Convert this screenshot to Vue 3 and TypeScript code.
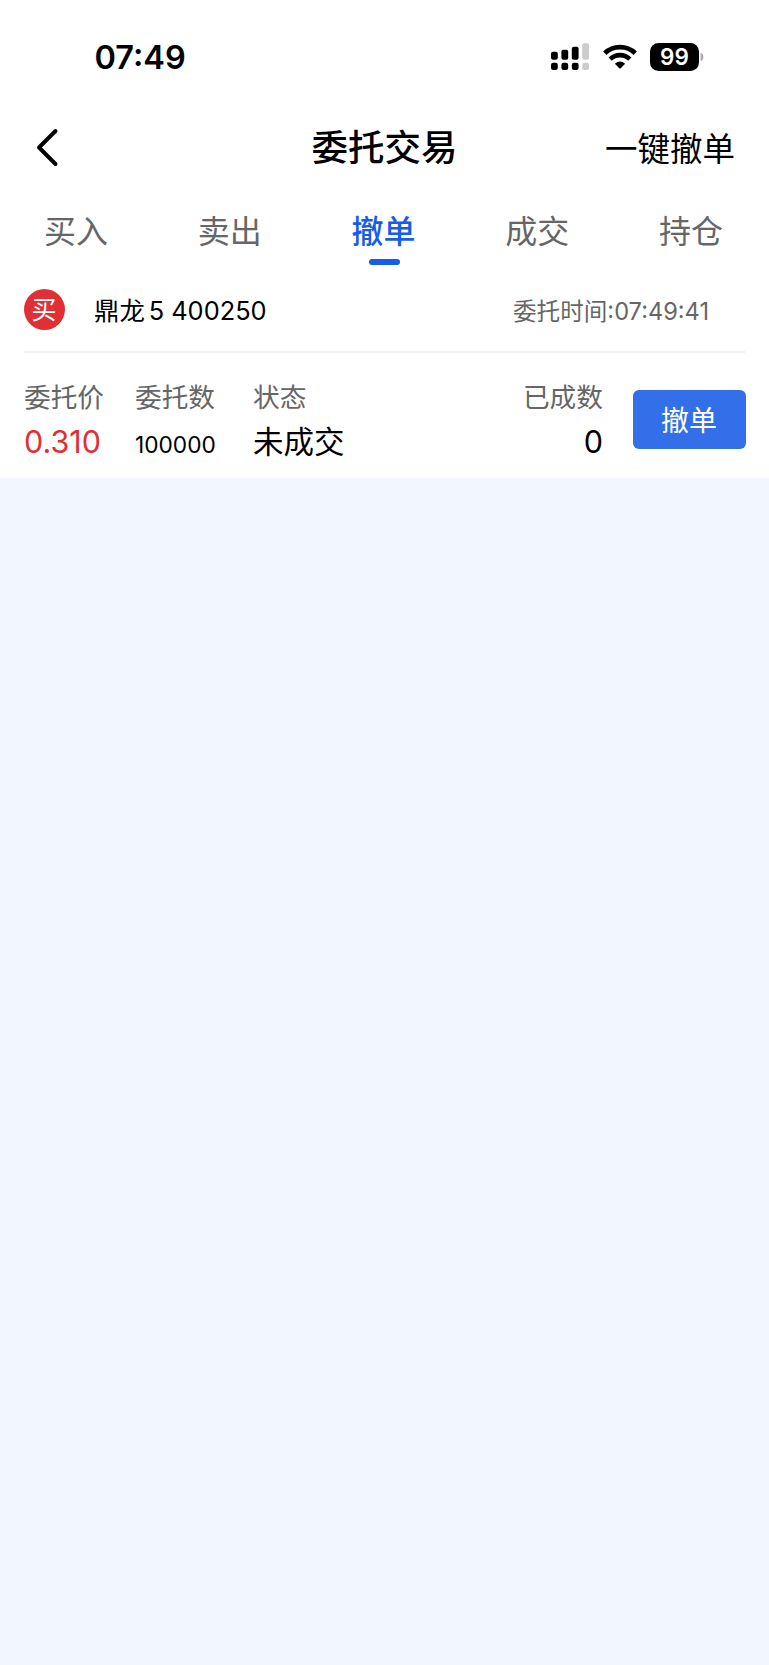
<script setup lang="ts">
import { ref } from 'vue'

interface Order {
  side: string
  name: string
  series: string
  code: string
  time: string
  price: string
  amount: string
  status: string
  filled: string
}

const tabs: string[] = ['买入', '卖出', '撤单', '成交', '持仓']
const active = ref(2)
const orders: Order[] = [
  {
    side: '买',
    name: '鼎龙',
    series: '5',
    code: '400250',
    time: '07:49:41',
    price: '0.310',
    amount: '100000',
    status: '未成交',
    filled: '0',
  },
]
</script>

<template>
  <div class="page">
    <header class="status">
      <span class="clock">07:49</span>
      <div class="indicators">
        <svg class="signal" width="39" height="28" viewBox="0 0 39 28">
          <g fill="#000">
            <rect x="0" y="8.7" width="6.8" height="8" rx="2" />
            <rect x="10.4" y="6.7" width="6.8" height="10" rx="2" />
            <rect x="20.8" y="3.7" width="6.8" height="13" rx="2" />
            <rect x="0" y="19.8" width="6.8" height="7.2" rx="2.2" />
            <rect x="10.4" y="19.8" width="6.8" height="7.2" rx="2.2" />
            <rect x="20.8" y="19.8" width="6.8" height="7.2" rx="2.2" />
          </g>
          <g fill="#ccc">
            <rect x="31.2" y="0.3" width="6.8" height="16.4" rx="2" />
            <rect x="31.2" y="19.8" width="6.8" height="7.2" rx="2.2" />
          </g>
        </svg>
        <svg class="wifi" width="34" height="26" viewBox="0 0 34 26">
          <g fill="none" stroke="#000" stroke-width="4.8">
            <path d="M1.8 9.3 A22 22 0 0 1 32.2 9.3" />
            <path d="M7.2 15.1 A14 14 0 0 1 26.8 15.1" />
          </g>
          <path d="M11.9 19.7 Q17 15.2 22.1 19.7 L17.7 24.2 Q17 24.9 16.3 24.2 Z" fill="#000" />
        </svg>
        <div class="battery">99</div>
        <svg class="cap" width="4" height="10" viewBox="0 0 4 10">
          <path d="M0.5 0.8 Q3.4 2 3.4 5 Q3.4 8 0.5 9.2 Z" fill="#aaa" />
        </svg>
      </div>
    </header>

    <nav class="navbar">
      <svg class="back" width="24" height="40" viewBox="0 0 24 40">
        <path d="M19.5 3 L3 19.5 L19.5 36" fill="none" stroke="#000" stroke-width="3.9" stroke-linecap="round" stroke-linejoin="round" />
      </svg>
      <h1 class="title">委托交易</h1>
      <span class="action">一键撤单</span>
    </nav>

    <div class="tabs">
      <div v-for="(tab, i) in tabs" :key="tab" class="tab" :class="{ active: i === active }" @click="active = i">
        <span class="tab-text">{{ tab }}</span>
        <i class="tab-line"></i>
      </div>
    </div>

    <section v-for="order in orders" :key="order.code" class="order">
      <div class="order-head">
        <span class="badge">{{ order.side }}</span>
        <div class="stock">
          <span>{{ order.name }}</span>
          <span class="series">{{ order.series }}</span>
          <span>{{ order.code }}</span>
        </div>
        <span class="time">委托时间:{{ order.time }}</span>
      </div>
      <div class="order-body">
        <div class="col price">
          <span class="label">委托价</span>
          <span class="value red">{{ order.price }}</span>
        </div>
        <div class="col amount">
          <span class="label">委托数</span>
          <span class="value small">{{ order.amount }}</span>
        </div>
        <div class="col state">
          <span class="label">状态</span>
          <span class="value">{{ order.status }}</span>
        </div>
        <div class="col filled">
          <span class="label">已成数</span>
          <span class="value">{{ order.filled }}</span>
        </div>
        <button class="cancel">撤单</button>
      </div>
    </section>
  </div>
</template>

<style>
body {
  margin: 0;
  background: #f2f6ff;
}
</style>

<style scoped>
.page {
  min-height: 1665px;
  background: #f2f6ff;
  color: #000;
  font-family: Inter, 'Noto Sans CJK SC', sans-serif;
}
.status {
  display: flex;
  justify-content: space-between;
  height: 114px;
  padding: 0 65px 0 94.5px;
  box-sizing: border-box;
  background: #fff;
}
.clock {
  margin-top: 38px;
  height: 40px;
  line-height: 40px;
  font-size: 32.5px;
  font-weight: 600;
}
.indicators {
  display: flex;
  align-items: flex-start;
  padding-top: 43px;
}
.wifi {
  margin: 1px 0 0 13px;
}
.battery {
  width: 49px;
  height: 28px;
  margin-left: 13px;
  border-radius: 8.5px;
  background: #000;
  color: #fff;
  font-size: 22.5px;
  font-weight: 600;
  line-height: 28px;
  text-align: center;
}
.cap {
  margin: 9px 0 0 1px;
}
.navbar {
  display: grid;
  grid-template-columns: 1fr auto 1fr;
  align-items: center;
  height: 68px;
  padding: 0 34px 0 35px;
  background: #fff;
}
.back {
  margin-left: 1px;
}
.title {
  margin: 0 1px 0 0;
  font-size: 36.5px;
  font-weight: 500;
  line-height: 66px;
}
.action {
  justify-self: end;
  padding-top: 3px;
  font-size: 32.5px;
  line-height: 65px;
}
.tabs {
  display: grid;
  grid-template-columns: repeat(5, 1fr);
  height: 90px;
  background: #fff;
}
.tab {
  display: flex;
  flex-direction: column;
  align-items: center;
  padding-top: 27px;
  color: #666;
  font-size: 32px;
}
.tab-text {
  height: 50px;
  margin-right: 2px;
  line-height: 46px;
}
.tab-line {
  width: 31px;
  height: 6px;
  border-radius: 3px;
}
.active {
  color: #165dea;
  font-weight: 500;
}
.active .tab-line {
  background: #165dea;
}
.order {
  height: 206px;
  padding: 0 23px 0 24px;
  background: #fff;
}
.order-head {
  display: flex;
  align-items: center;
  height: 79px;
  margin-right: 1px;
  border-bottom: 2px solid #f0f0f0;
}
.badge {
  width: 41px;
  height: 41px;
  margin: 0 0 5px -0.5px;
  border-radius: 50%;
  background: #e12f36;
  color: #fff;
  font-size: 25px;
  line-height: 42px;
  text-align: center;
}
.stock {
  display: flex;
  align-items: baseline;
  height: 40px;
  margin: 0 0 1px 29.5px;
  font-size: 25.4px;
  line-height: 40px;
}
.series {
  margin: 0 7px 0 4px;
}
.time {
  height: 40px;
  margin: 1px 36px 0 auto;
  color: #666;
  font-size: 23.6px;
  line-height: 40px;
}
.order-body {
  display: flex;
  height: 125px;
}
.col {
  display: flex;
  flex-direction: column;
  padding-top: 25px;
}
.price {
  width: 111px;
}
.amount {
  width: 118px;
}
.state {
  flex: 1;
}
.filled {
  align-items: flex-end;
  margin-right: 30px;
}
.label {
  height: 42px;
  color: #666;
  font-size: 26.7px;
  line-height: 38px;
}
.value {
  height: 44px;
  font-size: 30.5px;
  line-height: 44px;
  white-space: nowrap;
}
.red {
  color: #e12f36;
}
.small {
  font-size: 22.7px;
  line-height: 50px;
}
.cancel {
  width: 113px;
  height: 59px;
  margin: 37px 0 0;
  padding: 3px 1px 0 0;
  border: 0;
  border-radius: 6px;
  background: #326fe8;
  color: #fff;
  font-family: inherit;
  font-size: 28px;
  line-height: 56px;
}
</style>
